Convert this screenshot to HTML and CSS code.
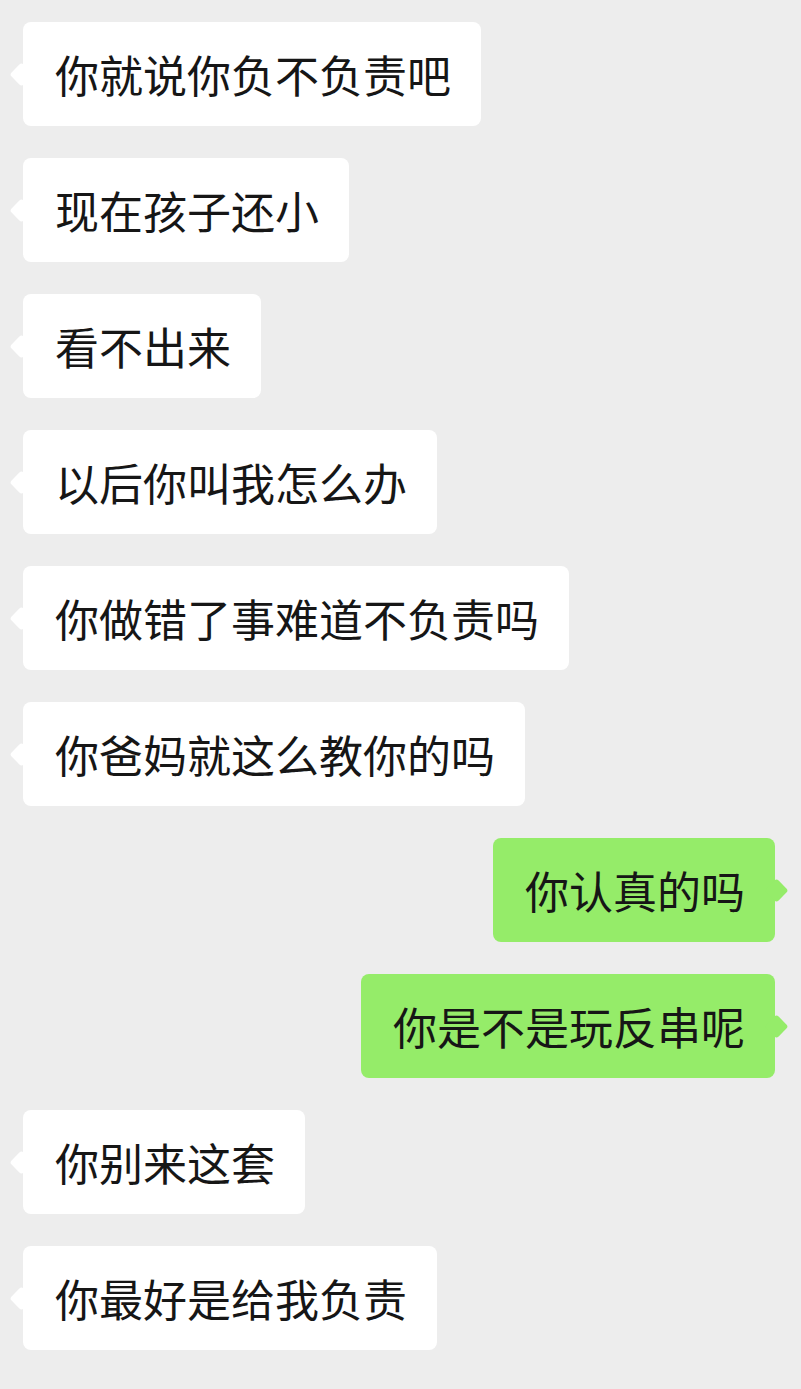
FILE: index.html
```html
<!DOCTYPE html>
<html lang="zh-CN">

<head>
  <meta charset="UTF-8">
  <meta name="viewport" content="width=device-width, initial-scale=1.0">
  <title>聊天记录</title>

  <link rel="stylesheet" href="styles.css">
</head>

<body>
  <!-- The chat column: every message is one row -->
  <div class="chat">

    <div class="row left"><div class="bubble">你就说你负不负责吧</div></div>
    <div class="row left"><div class="bubble">现在孩子还小</div></div>
    <div class="row left"><div class="bubble">看不出来</div></div>
    <div class="row left"><div class="bubble">以后你叫我怎么办</div></div>
    <div class="row left"><div class="bubble">你做错了事难道不负责吗</div></div>
    <div class="row left"><div class="bubble">你爸妈就这么教你的吗</div></div>

    <!-- My own messages sit on the right in green -->
    <div class="row right"><div class="bubble">你认真的吗</div></div>
    <div class="row right"><div class="bubble">你是不是玩反串呢</div></div>

    <div class="row left"><div class="bubble">你别来这套</div></div>
    <div class="row left"><div class="bubble">你最好是给我负责</div></div>

  </div>
</body>

</html>
```

FILE: styles.css
```css
/* The default margins are removed and the chat background is set. */
body {
  margin: 0;
  padding: 0;
  background-color: #ededed;
  font-family: "Noto Sans CJK SC", "Noto Sans", sans-serif;
}

/* The column of messages */
.chat {
  display: flex;
  flex-direction: column;
  gap: 32px;
  padding: 22px 26px 39px 23px;
}

.row {
  display: flex;
}

.row.left {
  justify-content: flex-start;
}

.row.right {
  justify-content: flex-end;
}

/* Common styles for the message bubbles */
.bubble {
  position: relative;
  padding: 30px 30px 30px 32px;
  border-radius: 8px;
  font-size: 44px;
  line-height: 44px;
  color: #161616;
  background-color: #ffffff;
  white-space: nowrap;
}

/* The little tail is a rotated square at the side of the bubble */
.bubble::before {
  content: "";
  position: absolute;
  top: 50%;
  width: 17px;
  height: 17px;
  margin-top: -8.5px;
  background-color: inherit;
  border-radius: 3px;
  transform: rotate(45deg);
}

.left .bubble::before {
  left: -10px;
}

.right .bubble {
  background-color: #95ec69;
}

.right .bubble::before {
  right: -10px;
}
```
